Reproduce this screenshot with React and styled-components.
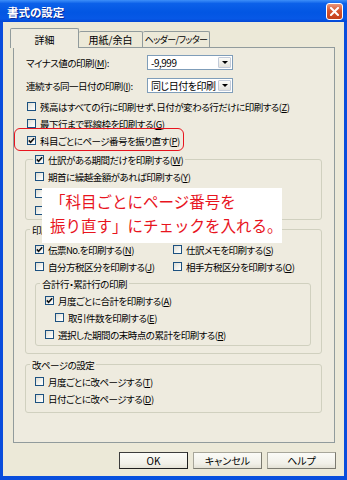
import React from 'react';
import styled, { createGlobalStyle } from 'styled-components';

const GlobalStyle = createGlobalStyle`
  html, body {
    margin: 0;
    padding: 0;
    background: #fff;
  }
  body {
    font-family: "Noto Sans CJK JP", "Noto Sans", sans-serif;
    font-feature-settings: "palt";
  }
`;

const Window = styled.div`
  width: 347px;
  height: 480px;
  display: flex;
  flex-direction: column;
  background: #0842d2;
  overflow: hidden;
`;

const TitleBar = styled.div`
  height: 22px;
  flex: none;
  display: flex;
  align-items: center;
  justify-content: space-between;
  padding: 0 4px 0 7px;
  background: linear-gradient(180deg, #3d8ff9 0%, #0c61e9 16%, #0256e3 55%, #0758e6 85%, #0447d4 100%);
`;

const Title = styled.span`
  color: #fff;
  font-size: 11.5px;
  font-weight: bold;
  padding-top: 2px;
  text-shadow: 1px 1px 0 #0a2a9c;
`;

const CloseButton = styled.div`
  width: 17px;
  height: 17px;
  box-sizing: border-box;
  border: 1px solid #fff;
  border-radius: 3px;
  background: linear-gradient(180deg, #e9967a 0%, #d6552f 45%, #c4401a 100%);
  display: flex;
  align-items: center;
  justify-content: center;
`;

const Frame = styled.div`
  flex: 1;
  display: flex;
  padding: 0 3px 4px;
  background: linear-gradient(90deg, #0a4ddc, #0652e0 50%, #0a4ddc);
`;

const Body = styled.div`
  flex: 1;
  display: flex;
  flex-direction: column;
  background: #ece9d8;
  padding: 6px 9px 0 10px;
  font-size: 9.5px;
  letter-spacing: -0.5px;
  color: #000;
`;

const TabStrip = styled.div`
  display: flex;
  align-items: flex-end;
  height: 20px;
  margin-left: -3px;
  margin-bottom: -1px;
  position: relative;
  z-index: 1;
`;

const Tab = styled.div`
  box-sizing: border-box;
  width: ${p => p.$width}px;
  height: ${p => (p.$active ? 20 : 16)}px;
  margin-bottom: ${p => (p.$active ? 0 : 1)}px;
  border: 1px solid #919b9c;
  border-bottom: none;
  border-left: ${p => (p.$first ? '1px solid #919b9c' : 'none')};
  border-radius: 2px 2px 0 0;
  background: ${p => (p.$active ? '#eeebdf' : '#ece9d8')};
  display: flex;
  align-items: center;
  justify-content: center;
  padding-top: ${p => (p.$active ? 1 : 0)}px;
  font-size: ${p => (p.$small ? 9 : 10)}px;
  letter-spacing: ${p => (p.$small ? -0.6 : 0)}px;
  white-space: nowrap;
`;

const Panel = styled.div`
  position: relative;
  box-sizing: border-box;
  height: 396px;
  border: 1px solid #919b9c;
  background: #eeebdf;
  padding: 6px 12px 0 11px;
  display: flex;
  flex-direction: column;
`;

const FieldRow = styled.div`
  display: flex;
  align-items: center;
  height: 17px;
  padding-left: 1px;
  margin-bottom: ${p => p.$gap || 0}px;
`;

const FieldLabel = styled.span`
  width: 121px;
  white-space: nowrap;
`;

const Combo = styled.div`
  width: 86px;
  height: 15px;
  box-sizing: border-box;
  border: 1px solid #7f9db9;
  background: #fff;
  display: flex;
  align-items: center;
  justify-content: space-between;
  padding-left: 3px;
  font-size: 10px;
  white-space: nowrap;
`;

const ComboArrow = styled.div`
  width: 13px;
  height: 11px;
  box-sizing: border-box;
  margin-right: 1px;
  border: 1px solid #c3cbd9;
  border-radius: 1px;
  background: linear-gradient(180deg, #fbfbf8, #e3e2dc);
  display: flex;
  align-items: center;
  justify-content: center;

  &::after {
    content: '';
    border-left: 3px solid transparent;
    border-right: 3px solid transparent;
    border-top: 3px solid #000;
  }
`;

const CheckRow = styled.div`
  display: flex;
  align-items: center;
  gap: 4px;
  height: 17px;
  padding-left: ${p => p.$indent || 0}px;
  white-space: nowrap;
`;

const HighlightRow = styled(CheckRow)`
  position: relative;
  align-self: flex-start;

  &::before {
    content: '';
    position: absolute;
    left: -11px;
    right: -4px;
    top: -4px;
    bottom: -2px;
    border: 1px solid #e8141e;
    border-radius: 6px;
  }
`;

const Box = styled.span`
  width: 9px;
  height: 9px;
  flex: none;
  box-sizing: border-box;
  border: 1px solid #1c5180;
  background: linear-gradient(135deg, #dcdcd4 0%, #f4f4f0 60%, #fff 100%);
  display: flex;
  align-items: center;
  justify-content: center;
`;

const Group = styled.fieldset`
  margin: ${p => p.$top || 0}px 0 0;
  padding: 0 10px ${p => p.$bottom || 0}px 9px;
  border: 1px solid #d0d0bf;
  border-radius: 3px;
  min-width: 0;
`;

const Legend = styled.legend`
  padding: 0 2px;
  margin-left: ${p => (p.$text ? -5 : -2)}px;
  height: 17px;
  display: flex;
  align-items: center;
  gap: 4px;
  white-space: nowrap;
`;

const TwoCol = styled.div`
  display: grid;
  grid-template-columns: 138px 1fr;
  margin-top: 3px;
`;

const Callout = styled.div`
  position: absolute;
  left: 28px;
  top: 140px;
  width: 240px;
  height: 55px;
  box-sizing: border-box;
  background: #fff;
  padding: 1px 0 0 8px;
  color: #e8141e;
  font-size: 15.5px;
  line-height: 24px;
  letter-spacing: 0;
  white-space: nowrap;
  font-feature-settings: normal;
`;

const ButtonBar = styled.div`
  display: flex;
  justify-content: flex-end;
  gap: 5px;
  margin-top: 9px;
  margin-right: -1px;
`;

const Button = styled.div`
  width: 69px;
  height: 17px;
  box-sizing: border-box;
  border: 1px solid ${p => (p.$default ? '#3c3c3c' : '#a7a69a')};
  border-right-color: ${p => (p.$default ? '#1e1e1e' : '#7b7a70')};
  border-bottom-color: ${p => (p.$default ? '#1e1e1e' : '#7b7a70')};
  background: linear-gradient(180deg, #fbfbf7 0%, #f1f0e8 70%, #e4e2d6 100%);
  display: flex;
  align-items: center;
  justify-content: center;
  font-size: 10px;
  letter-spacing: 0;
`;

function Check({ checked }) {
  return (
    <Box>
      {checked && (
        <svg width="7" height="7" viewBox="0 0 7 7">
          <path d="M0.8 3.4 L2.6 5.3 L6.2 1.2" fill="none" stroke="#111" strokeWidth="1.6" />
        </svg>
      )}
    </Box>
  );
}

function Key({ k }) {
  return (
    <>
      (<u>{k}</u>)
    </>
  );
}

function Option({ label, k, checked, indent }) {
  return (
    <CheckRow $indent={indent}>
      <Check checked={checked} />
      {label && (
        <span>
          {label}
          <Key k={k} />
        </span>
      )}
    </CheckRow>
  );
}

export default function App() {
  return (
    <>
      <GlobalStyle />
      <Window>
        <TitleBar>
          <Title>書式の設定</Title>
          <CloseButton>
            <svg width="9" height="9" viewBox="0 0 9 9">
              <path d="M1 1 L8 8 M8 1 L1 8" stroke="#fff" strokeWidth="2" strokeLinecap="square" />
            </svg>
          </CloseButton>
        </TitleBar>
        <Frame>
          <Body>
            <TabStrip>
              <Tab $active $first $width={69}>詳細</Tab>
              <Tab $width={64}>用紙/余白</Tab>
              <Tab $width={67} $small>ヘッダー/フッター</Tab>
            </TabStrip>
            <Panel>
              <FieldRow $gap={6}>
                <FieldLabel>マイナス値の印刷<Key k="M" />:</FieldLabel>
                <Combo>
                  -9,999
                  <ComboArrow />
                </Combo>
              </FieldRow>
              <FieldRow $gap={4}>
                <FieldLabel>連続する同一日付の印刷<Key k="I" />:</FieldLabel>
                <Combo>
                  同じ日付を印刷
                  <ComboArrow />
                </Combo>
              </FieldRow>
              <Option indent={2} label="残高はすべての行に印刷せず、日付が変わる行だけに印刷する" k="Z" />
              <Option indent={2} label="最下行まで罫線枠を印刷する" k="G" />
              <HighlightRow $indent={2}>
                <Check checked />
                <span>
                  科目ごとにページ番号を振り直す<Key k="P" />
                </span>
              </HighlightRow>

              <Group $top={2}>
                <Legend>
                  <Check checked />
                  <span>
                    仕訳がある期間だけを印刷する<Key k="W" />
                  </span>
                </Legend>
                <Option label="期首に繰越金額があれば印刷する" k="Y" />
                <Option />
                <Option />
              </Group>

              <Group $top={1} $bottom={7}>
                <Legend $text>印刷</Legend>
                <TwoCol>
                  <Option checked label="伝票No.を印刷する" k="N" />
                  <Option label="仕訳メモを印刷する" k="S" />
                  <Option label="自分方税区分を印刷する" k="J" />
                  <Option label="相手方税区分を印刷する" k="O" />
                </TwoCol>
                <Group $bottom={2}>
                  <Legend $text>合計行・累計行の印刷</Legend>
                  <Option checked label="月度ごとに合計を印刷する" k="A" />
                  <Option indent={10} label="取引件数を印刷する" k="E" />
                  <Option label="選択した期間の末時点の累計を印刷する" k="R" />
                </Group>
              </Group>

              <Group $top={2} $bottom={5}>
                <Legend $text>改ページの設定</Legend>
                <Option label="月度ごとに改ページする" k="T" />
                <Option label="日付ごとに改ページする" k="D" />
              </Group>

              <Callout>
                「科目ごとにページ番号を
                <br />
                振り直す」にチェックを入れる。
              </Callout>
            </Panel>
            <ButtonBar>
              <Button $default>OK</Button>
              <Button>キャンセル</Button>
              <Button>ヘルプ</Button>
            </ButtonBar>
          </Body>
        </Frame>
      </Window>
    </>
  );
}
